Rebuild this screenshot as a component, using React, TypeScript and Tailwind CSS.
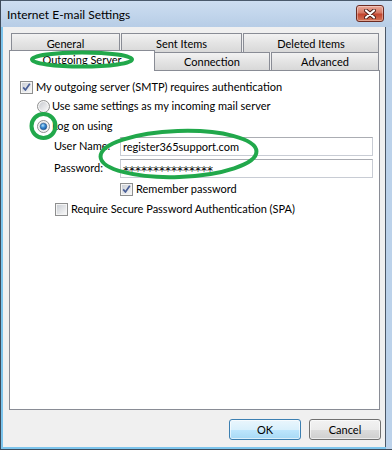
import React from 'react';

const FONT = "font-['Lato',sans-serif]";

function CheckBox({ checked = false }: { checked?: boolean }) {
  return (
    <svg width={13} height={13} viewBox="0 0 13 13" className="shrink-0">
      <defs>
        <linearGradient id="cbFill" x1="0" y1="0" x2="1" y2="1">
          <stop offset="0" stopColor="#cbcfd5" />
          <stop offset="1" stopColor="#f7f7f7" />
        </linearGradient>
      </defs>
      <rect x={0.5} y={0.5} width={12} height={12} fill="#f4f4f4" stroke="#8e8f8f" />
      <rect x={2} y={2} width={9} height={9} fill="url(#cbFill)" />
      {checked && (
        <path d="M3.2 6.4 L5.4 9 L9.8 2.8" fill="none" stroke="#4a5f97" strokeWidth={1.7} strokeLinejoin="round" />
      )}
    </svg>
  );
}

function Radio({ selected = false }: { selected?: boolean }) {
  return (
    <svg width={13} height={13} viewBox="0 0 13 13" className="shrink-0">
      <defs>
        <linearGradient id="rbFill" x1="0" y1="0" x2="1" y2="1">
          <stop offset="0" stopColor="#c9ccd1" />
          <stop offset="1" stopColor="#f8f8f8" />
        </linearGradient>
        <radialGradient id="rbDot" cx="0.4" cy="0.35" r="0.7">
          <stop offset="0" stopColor="#b9e4fb" />
          <stop offset="0.45" stopColor="#3d8fd6" />
          <stop offset="1" stopColor="#144f94" />
        </radialGradient>
      </defs>
      <circle cx={6.5} cy={6.5} r={6} fill="#f4f4f4" stroke="#8e8f8f" />
      <circle cx={6.5} cy={6.5} r={4.4} fill="url(#rbFill)" />
      {selected && <circle cx={6.5} cy={6.5} r={3.3} fill="url(#rbDot)" stroke="#1d4f85" strokeWidth={0.5} />}
    </svg>
  );
}

function TextBox({ value, masked = false }: { value: string; masked?: boolean }) {
  return (
    <div
      className={`w-[253px] h-[19px] bg-white border border-[#c8ccd4] border-t-[#abadb3] flex items-center pl-[2px] text-black leading-none ${
        masked ? "font-['DejaVu_Sans',sans-serif] text-[12px] pt-[4px]" : 'text-[11px]'
      }`}
    >
      {value}
    </div>
  );
}

export default function App() {
  return (
    <div className={`w-[392px] h-[450px] flex flex-col bg-[#bcd2ea] border-l border-b border-[#3d4b5b] overflow-hidden relative ${FONT}`}>
      {/* Title bar */}
      <div className="h-[27px] shrink-0 border-t border-[#4a5a6c] bg-[linear-gradient(#cddef1,#b7cde6)] flex items-start relative">
        <span className="ml-[6px] mt-[5px] text-[12px] text-black">Internet E-mail Settings</span>
        <div className="ml-auto mr-[8px] mt-[4px] w-[28px] h-[17px] rounded-[3px] border border-[#6c2b22] bg-[linear-gradient(#e9a99a,#d67a66_45%,#c2452f_55%,#d4775a)] flex items-center justify-center shadow-[inset_0_0_0_1px_rgba(255,255,255,0.35)]">
          <svg width={12} height={10} viewBox="0 0 12 10">
            <path d="M2 1.5 L10 8.5 M10 1.5 L2 8.5" stroke="#4a1e18" strokeWidth={4} strokeLinecap="round" />
            <path d="M2 1.5 L10 8.5 M10 1.5 L2 8.5" stroke="#ffffff" strokeWidth={2.2} strokeLinecap="round" />
          </svg>
        </div>
      </div>

      {/* Client area */}
      <div className="flex-1 flex border-l-2 border-b-2 border-[#7cc4ec] mr-[6px]">
        <div className="flex-1 bg-[#f0f0f0] border-r border-[#4b5766] flex flex-col pl-[6px] pt-[6px] text-[11px] text-black">
          {/* Back tab row */}
          <div className="flex ml-[2px] h-[17px] gap-[1px]">
            {[
              ['General', 'w-[109px]'],
              ['Sent Items', 'w-[121px]'],
              ['Deleted Items', 'w-[136px]'],
            ].map(([label, w]) => (
              <div
                key={label}
                className={`${w} h-[19px] border border-b-0 border-[#898c95] bg-[linear-gradient(#f2f2f2,#e4e4e4_50%,#d8d8d8)] flex items-center justify-center pt-[2px]`}
              >
                {label}
              </div>
            ))}
          </div>
          {/* Front tab row */}
          <div className="flex h-[20px] items-end relative z-10">
            <div className="w-[146px] h-[21px] mb-[-1px] border border-b-0 border-[#898c95] bg-white flex items-center justify-center pb-[1px]">
              Outgoing Server
            </div>
            <div className="w-[115px] h-[18px] border border-l-0 border-b-0 border-[#898c95] bg-[linear-gradient(#f2f2f2,#e4e4e4_50%,#d8d8d8)] flex items-center justify-center pt-[2px]">
              Connection
            </div>
            <div className="w-[108px] h-[18px] ml-[1px] border border-b-0 border-[#898c95] bg-[linear-gradient(#f2f2f2,#e4e4e4_50%,#d8d8d8)] flex items-center justify-center pt-[2px]">
              Advanced
            </div>
          </div>

          {/* Tab panel */}
          <div className="w-[371px] h-[340px] border border-[#898c95] bg-white flex flex-col pl-[10px]">
            <div className="mt-[10px] h-[13px] flex items-center gap-[3px]">
              <CheckBox checked />
              <span>My outgoing server (SMTP) requires authentication</span>
            </div>
            <div className="mt-[6px] h-[13px] ml-[17px] flex items-center gap-[2px]">
              <Radio />
              <span>Use same settings as my incoming mail server</span>
            </div>
            <div className="mt-[7px] h-[13px] ml-[17px] flex items-center gap-[2px]">
              <Radio selected />
              <span>Log on using</span>
            </div>
            <div className="mt-[4px] flex items-center ml-[34px]">
              <span className="w-[66px]">User Name:</span>
              <TextBox value="register365support.com" />
            </div>
            <div className="mt-[3px] flex items-center ml-[34px]">
              <span className="w-[66px]">Password:</span>
              <TextBox value="***************" masked />
            </div>
            <div className="mt-[5px] h-[13px] ml-[100px] flex items-center gap-[3px]">
              <CheckBox checked />
              <span>Remember password</span>
            </div>
            <div className="mt-[7px] h-[13px] ml-[35px] flex items-center gap-[3px]">
              <CheckBox />
              <span>Require Secure Password Authentication (SPA)</span>
            </div>
          </div>

          {/* Buttons */}
          <div className="mt-[9px] flex justify-end gap-[8px] pr-[4px]">
            <button className="w-[72px] h-[21px] rounded-[3px] border border-[#3c7fb1] bg-[linear-gradient(#eaf6fd_0%,#d9f0fc_50%,#bee6fd_51%,#a7d9f5_100%)] shadow-[inset_0_0_0_1px_rgba(255,255,255,0.6)] text-[11px] leading-none">
              OK
            </button>
            <button className="w-[72px] h-[21px] rounded-[3px] border border-[#707070] bg-[linear-gradient(#f2f2f2_0%,#ebebeb_50%,#dddddd_51%,#cfcfcf_100%)] shadow-[inset_0_0_0_1px_rgba(255,255,255,0.6)] text-[11px] leading-none">
              Cancel
            </button>
          </div>
        </div>
      </div>

      {/* Green annotation marks */}
      <svg className="absolute inset-0 pointer-events-none z-20" width={392} height={450} viewBox="0 0 392 450">
        <g fill="none" stroke="#21a84b" strokeWidth={4}>
          <ellipse cx={81} cy={59.5} rx={50} ry={7} />
          <circle cx={42.5} cy={126} r={12} />
          <ellipse cx={177.5} cy={154} rx={78} ry={23} transform="rotate(-2 177.5 154)" />
        </g>
      </svg>
    </div>
  );
}
